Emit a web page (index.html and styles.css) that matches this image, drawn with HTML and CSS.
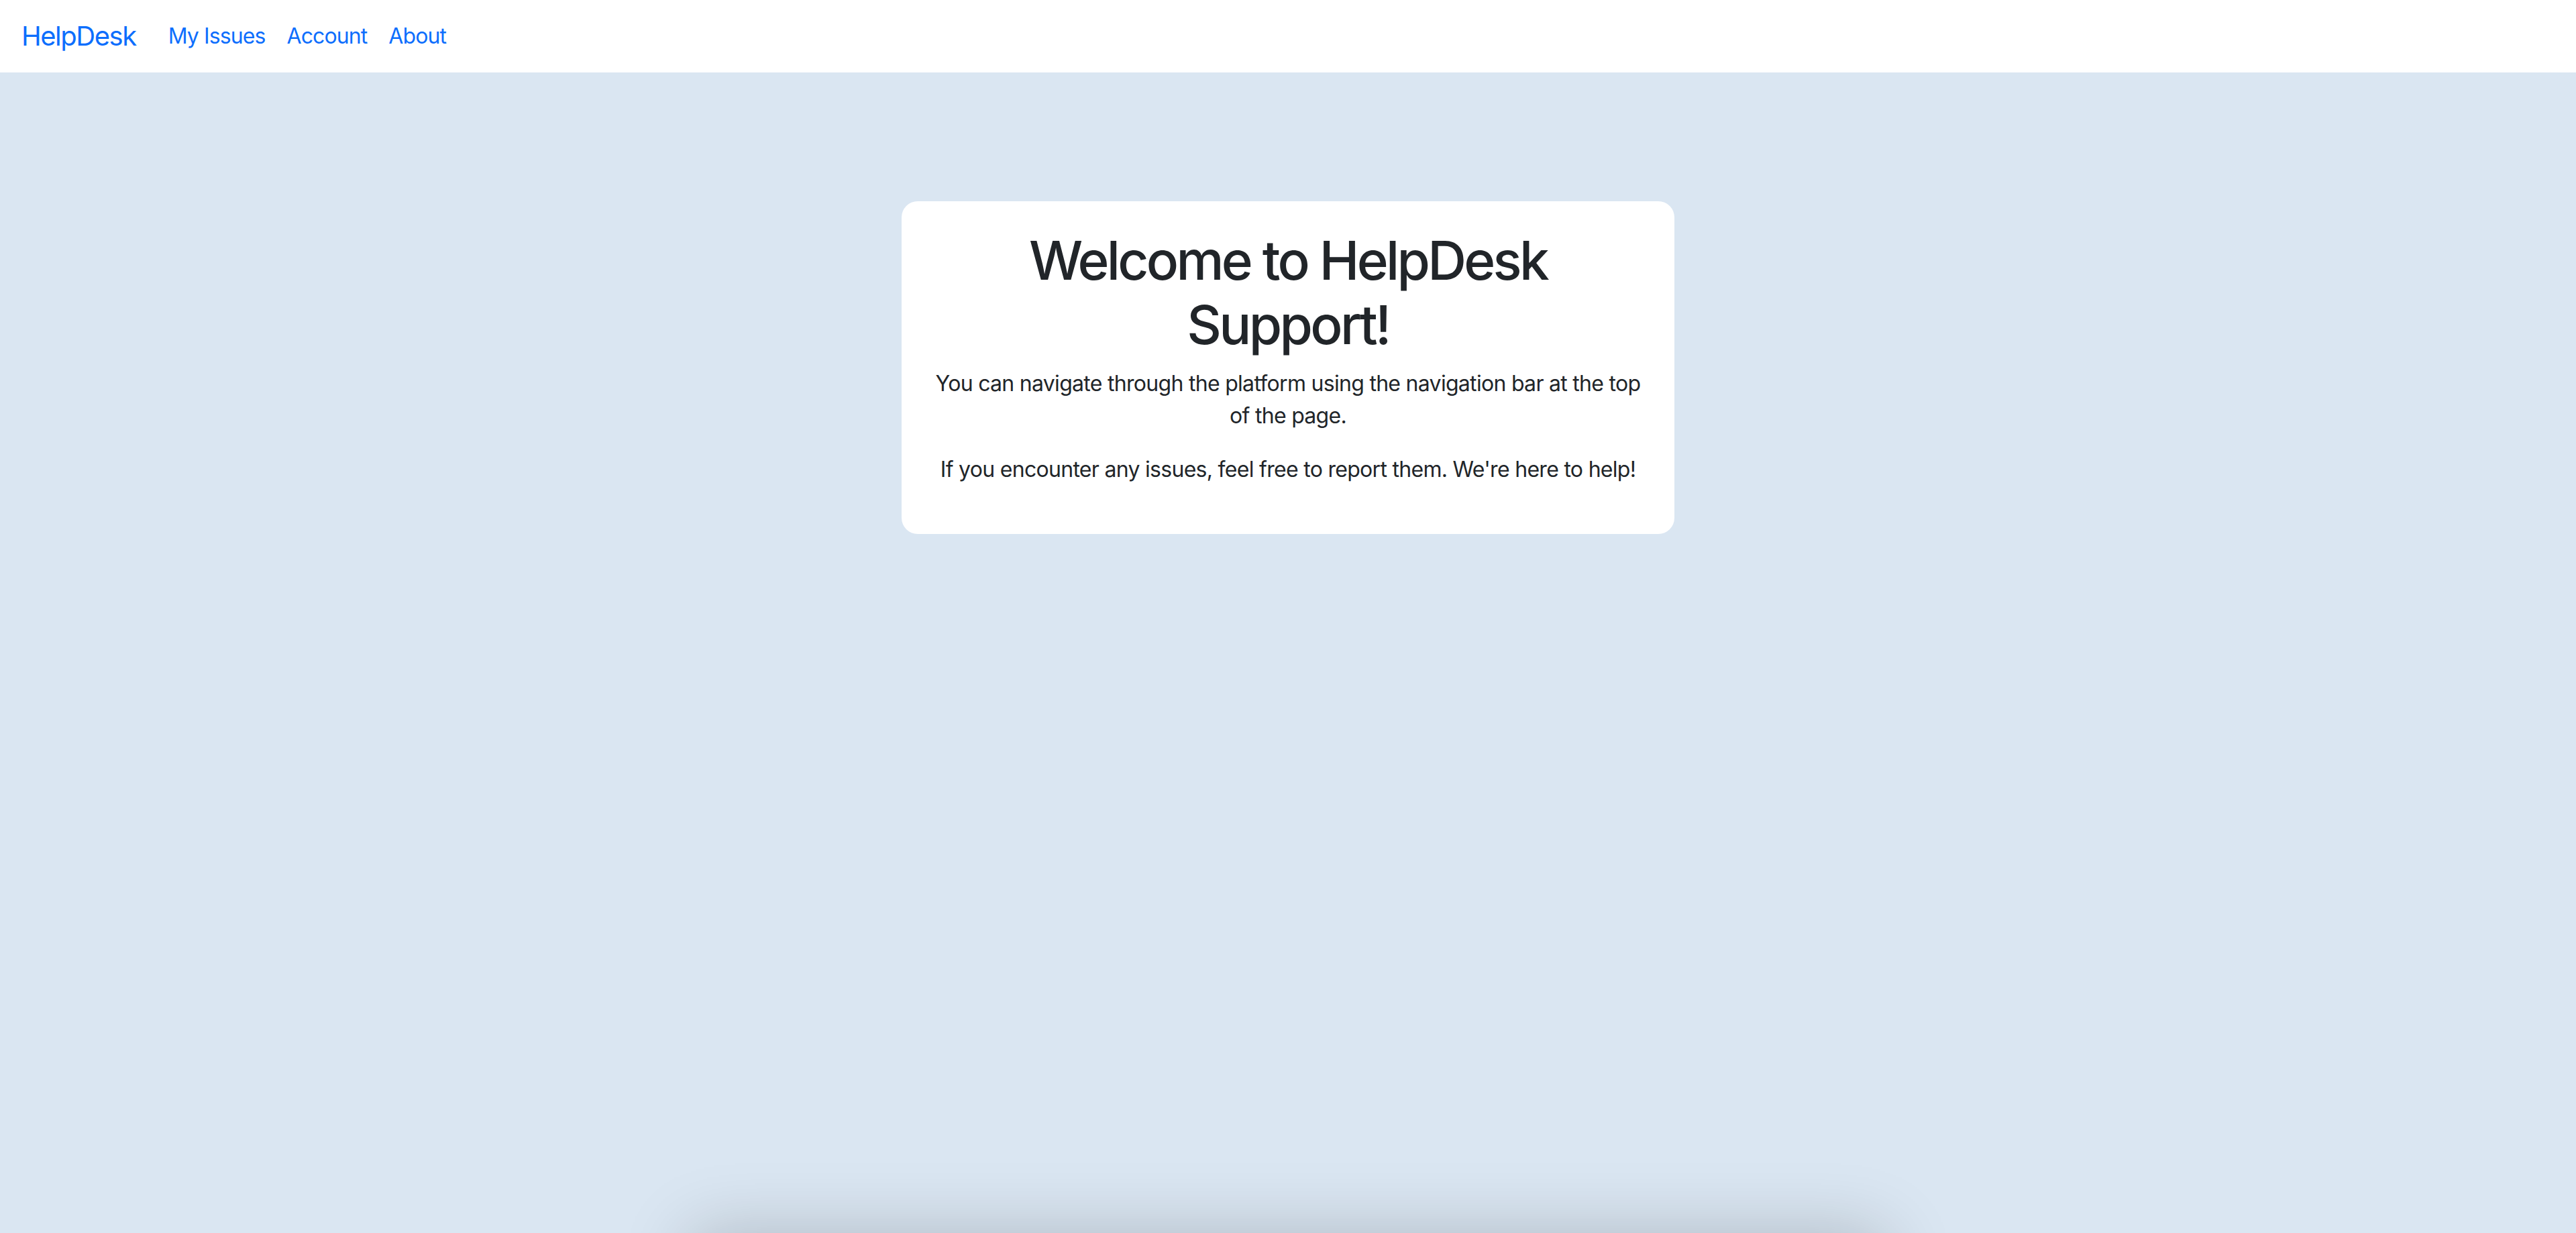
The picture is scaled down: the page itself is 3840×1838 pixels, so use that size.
FILE: index.html
```html
<!DOCTYPE html>
<html lang="en">
<head>
<meta charset="utf-8">
<title>HelpDesk</title>
<link rel="stylesheet" href="styles.css">
</head>
<body>
<div class="page">
  <nav class="navbar">
    <a class="brand" href="#">HelpDesk</a>
    <ul class="nav-links">
      <li><a class="nav-link" href="#">My Issues</a></li>
      <li><a class="nav-link" href="#">Account</a></li>
      <li><a class="nav-link" href="#">About</a></li>
    </ul>
  </nav>
  <main class="main">
    <section class="welcome-card">
      <h1 class="welcome-title">Welcome to HelpDesk Support!</h1>
      <p class="welcome-text">You can navigate through the platform using the navigation bar at the top of the page.</p>
      <p class="welcome-text">If you encounter any issues, feel free to report them. We're here to help!</p>
    </section>
  </main>
</div>
<footer class="below-fold"></footer>
</body>
</html>
```

FILE: styles.css
```css
* {
  box-sizing: border-box;
}

html, body {
  margin: 0;
  padding: 0;
}

body {
  background: #dae6f2;
  font-family: Inter, "Noto Sans", "Liberation Sans", sans-serif;
  color: #212529;
  font-size: 32px;
  line-height: 1.5;
}

.page {
  min-height: 100vh;
  display: flex;
  flex-direction: column;
}

.navbar {
  height: 108px;
  background: #ffffff;
  display: flex;
  align-items: center;
  padding: 0 32px;
}

.brand {
  color: #0d6efd;
  text-decoration: none;
  font-size: 40px;
  line-height: 60px;
  letter-spacing: -0.037em;
  margin-right: 32px;
}

.nav-links {
  list-style: none;
  margin: 0;
  padding: 0;
  display: flex;
}

.nav-link {
  display: block;
  color: #0d6efd;
  text-decoration: none;
  font-size: 32px;
  line-height: 48px;
  letter-spacing: -0.028em;
  padding: 0 16px;
}

.main {
  flex: 1;
  display: flex;
  justify-content: center;
  align-items: flex-start;
  padding-top: 192px;
}

.welcome-card {
  width: 1152px;
  background: #ffffff;
  border-radius: 24px;
  padding: 40px 40px 40px;
  text-align: center;
}

.welcome-title {
  margin: 0 0 16px;
  font-size: 80px;
  line-height: 96px;
  font-weight: 500;
  letter-spacing: -0.046em;
  color: #212529;
}

.welcome-text {
  margin: 0 0 32px;
  font-size: 32px;
  line-height: 48px;
  letter-spacing: -0.022em;
}

.below-fold {
  width: 1780px;
  height: 400px;
  margin: 0 auto;
  background: #ffffff;
  box-shadow: 0 0 100px rgba(0, 0, 0, 0.2);
}
```
